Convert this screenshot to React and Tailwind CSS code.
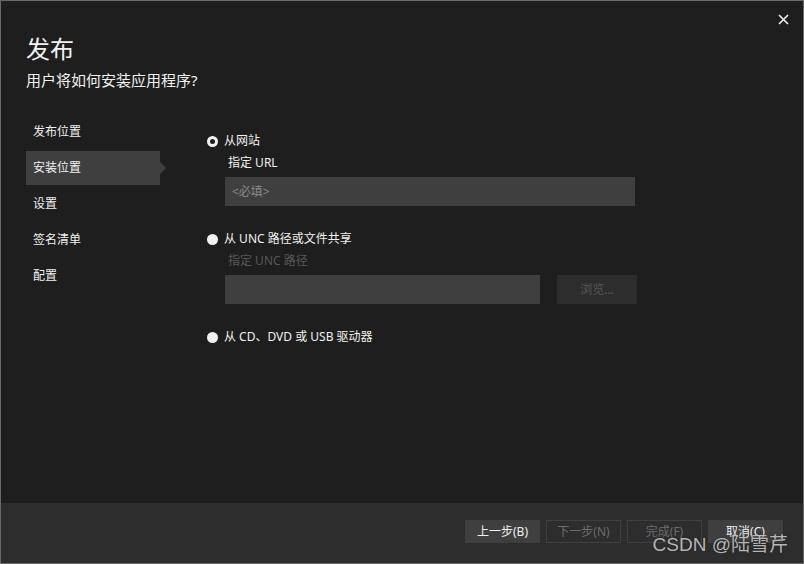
import React from "react";

const font = { fontFamily: '"Noto Sans", "Noto Sans CJK SC", sans-serif' };

function Radio({ checked }) {
  return checked ? (
    <span className="w-[11px] h-[11px] rounded-full bg-[#f1f1f1] flex items-center justify-center shrink-0">
      <span className="w-[5px] h-[5px] rounded-full bg-[#1e1e1e]" />
    </span>
  ) : (
    <span className="w-[11px] h-[11px] rounded-full bg-[#f1f1f1] shrink-0" />
  );
}

function Option({ checked, children }) {
  return (
    <div className="h-[20px] flex items-center gap-[6px] text-[12px] text-[#f1f1f1]">
      <Radio checked={checked} />
      <span>{children}</span>
    </div>
  );
}

function NavItem({ active, children }) {
  return (
    <div className="relative">
      <div
        className={
          "h-[34px] flex items-center pl-[7px] text-[12px] text-[#f1f1f1] " +
          (active ? "bg-[#3f3f3f]" : "")
        }
      >
        {children}
      </div>
      {active && (
        <span className="absolute right-[-6px] top-[11px] w-0 h-0 border-y-[6px] border-y-transparent border-l-[6px] border-l-[#3f3f3f]" />
      )}
    </div>
  );
}

function Button({ disabled, children }) {
  return (
    <button
      className={
        "w-[75px] h-[23px] text-[12px] flex items-center justify-center " +
        (disabled
          ? "border border-[#3f3f3f] text-[#6b6b6b] bg-[#2d2d2d]"
          : "bg-[#3f3f3f] text-[#f1f1f1]")
      }
    >
      {children}
    </button>
  );
}

export default function App() {
  return (
    <div
      className="relative w-[804px] h-[564px] border border-[#6a6a6a] bg-[#1e1e1e] flex flex-col overflow-hidden"
      style={font}
    >
      <div className="flex-1 relative px-[25px] pt-[32px]">
        <svg
          className="absolute right-[14px] top-[13px]"
          width="11"
          height="11"
          viewBox="0 0 11 11"
        >
          <path d="M1 1L10 10M10 1L1 10" stroke="#f1f1f1" strokeWidth="1.6" />
        </svg>

        <div className="text-[24px] leading-[32px] text-[#f1f1f1]">发布</div>
        <div className="mt-[5px] text-[15px] leading-[20px] text-[#f1f1f1]">
          用户将如何安装应用程序?
        </div>

        <div className="mt-[25px] flex items-start">
          <div className="w-[134px] flex flex-col gap-[2px]">
            <NavItem>发布位置</NavItem>
            <NavItem active>安装位置</NavItem>
            <NavItem>设置</NavItem>
            <NavItem>签名清单</NavItem>
            <NavItem>配置</NavItem>
          </div>

          <div className="ml-[47px] pt-[16px] flex flex-col">
            <Option checked>从网站</Option>
            <div className="mt-[2px] ml-[21px] h-[20px] flex items-center text-[12px] text-[#f1f1f1]">
              指定 URL
            </div>
            <div className="mt-[4px] ml-[18px] w-[410px] h-[29px] bg-[#3f3f3f] flex items-center pl-[7px] text-[12px] text-[#8a8a8a]">
              &lt;必填&gt;
            </div>

            <div className="mt-[23px]">
              <Option>从 UNC 路径或文件共享</Option>
            </div>
            <div className="mt-[2px] ml-[21px] h-[20px] flex items-center text-[12px] text-[#575757]">
              指定 UNC 路径
            </div>
            <div className="mt-[4px] ml-[18px] flex gap-[17px]">
              <div className="w-[315px] h-[29px] bg-[#3f3f3f]" />
              <div className="w-[80px] h-[29px] bg-[#2d2d2d] flex items-center justify-center text-[12px] text-[#575757]">
                浏览...
              </div>
            </div>

            <div className="mt-[23px]">
              <Option>从 CD、DVD 或 USB 驱动器</Option>
            </div>
          </div>
        </div>
      </div>

      <div className="h-[60px] bg-[#2d2d2d] flex justify-end items-start pt-[17px] pr-[20px] gap-[6px]">
        <Button>上一步(B)</Button>
        <Button disabled>下一步(N)</Button>
        <Button disabled>完成(F)</Button>
        <Button>取消(C)</Button>
      </div>

      <div
        className="absolute right-[15px] bottom-[6px] text-[19px] leading-[24px] text-[#d0d0d0]/85 pointer-events-none"
        style={{ fontFamily: '"Liberation Sans", "Noto Sans CJK SC", sans-serif', textShadow: "0 0 2px #222" }}
      >
        CSDN @陆雪芹
      </div>
    </div>
  );
}
